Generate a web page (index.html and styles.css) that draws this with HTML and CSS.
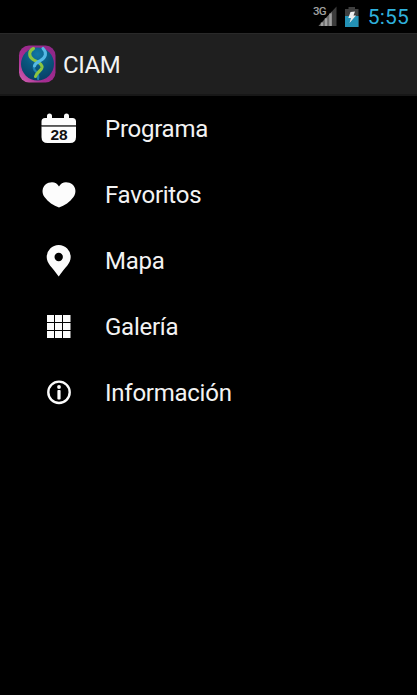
FILE: index.html
```html
<!DOCTYPE html>
<html lang="es">
<head>
    <meta charset="UTF-8">
    <meta name="viewport" content="width=device-width, initial-scale=1.0">
    <title>CIAM</title>
    <link rel="stylesheet" href="styles.css">
</head>
<body>
    <!-- Status bar -->
    <div class="status-bar">
        <svg class="signal" width="24" height="26" viewBox="0 -2 24 26">
            <path d="M5.500 20L23.500 .5V20Z" fill="#3c3c3c"/>
            <path d="M5.500 20L19 5.400V20Z" fill="#6a6a6a"/>
            <path d="M9 16.500V20M13 12.200V20M17.500 7.500V20" stroke="#a0a0a0" stroke-width="2.400"/>
            <text x="0" y="9">3G</text>
        </svg>
        <svg class="battery" width="14" height="20" viewBox="0 0 14 20">
            <path d="M3.500 0h6.500v2H13.500v18H0V2h3.500z" fill="#3f3f3f"/>
            <path d="M0 9h13.500v11H0z" fill="#2391b5"/>
            <path d="M5.500 5l4.500-.5-1.500 4h2.500L4.500 16l1.500-5H3.300z" fill="#eee"/>
        </svg>
        <span class="clock">5:55</span>
    </div>

    <!-- Action bar -->
    <div class="action-bar">
        <svg class="logo" width="38" height="38" viewBox="0 0 38 38">
            <defs>
                <linearGradient id="frame" x1="0" y1="1" x2="1" y2="0">
                    <stop offset="0" stop-color="#d565b4"/>
                    <stop offset=".35" stop-color="#a52c91"/>
                    <stop offset="1" stop-color="#8c2786"/>
                </linearGradient>
                <radialGradient id="ball" cx=".5" cy=".2" r=".8">
                    <stop offset="0" stop-color="#1279a6"/>
                    <stop offset=".5" stop-color="#09577f"/>
                    <stop offset="1" stop-color="#093f66"/>
                </radialGradient>
            </defs>
            <rect x="1" y=".5" width="36.500" height="37" rx="10" fill="url(#frame)"/>
            <circle cx="19.500" cy="19" r="16.500" fill="url(#ball)"/>
            <g fill="none" stroke-linecap="round">
                <path d="M17 18C14.500 22 16 25 18.500 27 20.500 29 20.500 31 20 34" stroke="#1f7fae" stroke-width="2.200"/>
                <path d="M15.500 3.500C10.500 6 10.500 11.500 15 14.500 18.500 16.800 24.500 18 24 22.500 23.500 26 18.500 27 17.500 31.500" stroke="#8bc53f" stroke-width="3.100"/>
                <path d="M25 3.500C29.500 8 27.500 12.500 22.500 15.500 20 17 17.500 18 16.500 21" stroke="#55b9e5" stroke-width="3.100"/>
            </g>
        </svg>
        <h1>CIAM</h1>
    </div>

    <!-- Menu -->
    <ul class="menu">
        <li>
            <svg width="36" height="36" viewBox="0 0 36 36">
                <path d="M.5 14V10.500Q.5 7 4 7H6V5a2.500 2.500 0 0 1 5 0v2h12V5a2.500 2.500 0 0 1 5 0v2h3.500Q35 7 35 10.500V14z"/>
                <path d="M.5 15.500H35V26Q35 32 29 32H6.500Q.5 32 .5 26z"/>
                <path d="M.5 14H35v1.500H.5z" fill="#555"/>
                <text class="day" x="18" y="28.500">28</text>
            </svg>
            <span>Programa</span>
        </li>
        <li>
            <svg width="36" height="36" viewBox="0 0 36 36">
                <path d="M18 9.500C15.500 4 8.500 4.200 4.500 7.500 1 10.500.5 16 3.500 20 7 25 12.500 28.500 18 30.500c5.500-2 11-5.500 14.500-10.500 3-4 2.500-9.500-1-12.500C27.500 4.200 20.500 4 18 9.500z"/>
            </svg>
            <span>Favoritos</span>
        </li>
        <li>
            <svg width="36" height="36" viewBox="0 0 36 36">
                <path fill-rule="evenodd" d="M17.700 2A12 12 0 0 0 5.700 14C5.700 20.500 11 24 17.700 33.500 24.400 24 29.700 20.500 29.700 14A12 12 0 0 0 17.700 2zM17.700 9.800a4.200 4.200 0 1 1 0 8.400 4.200 4.200 0 0 1 0-8.400z"/>
            </svg>
            <span>Mapa</span>
        </li>
        <li>
            <svg width="36" height="36" viewBox="0 0 36 36">
                <path d="M6 6h7v7H6zM14 6h7v7h-7zM22 6h7.500v7H22zM6 14h7v7H6zM14 14h7v7h-7zM22 14h7.500v7H22zM6 22h7v7H6zM14 22h7v7h-7zM22 22h7.500v7H22z"/>
            </svg>
            <span>Galería</span>
        </li>
        <li>
            <svg width="36" height="36" viewBox="0 0 36 36">
                <circle cx="18" cy="17.300" r="10.700" fill="none" stroke="#fcfcfc" stroke-width="2.400"/>
                <circle cx="18" cy="12" r="1.900"/>
                <rect x="16.400" y="15" width="3.200" height="9.500" rx=".8"/>
            </svg>
            <span>Información</span>
        </li>
    </ul>
</body>
</html>
```

FILE: styles.css
```css
body {
    font-family: Roboto, sans-serif;
    background-color: #000;
    color: #f3f3f3;
    margin: 0;
    padding: 0;
}
.status-bar {
    display: flex;
    justify-content: flex-end;
    align-items: center;
    height: 33px;
    padding-right: 8px;
    box-sizing: border-box;
}
.signal {
    margin-right: 8px;
    overflow: visible;
}
.signal text {
    font-size: 11.5px;
    font-weight: 500;
    letter-spacing: -0.8px;
    fill: #a0a0a0;
}
.battery {
    margin-right: 9px;
}
.clock {
    font-size: 21px;
    letter-spacing: 0.2px;
    color: #2fb1dc;
}
.action-bar {
    display: flex;
    align-items: center;
    height: 63px;
    padding-left: 18px;
    box-sizing: border-box;
    background-color: #1f1f1f;
    border-top: 1px solid #292929;
    border-bottom: 2px solid #171717;
}
h1 {
    margin: 2px 0 0 7px;
    font-size: 24px;
    font-weight: 400;
    letter-spacing: -0.4px;
}
.menu {
    list-style: none;
    margin: 0;
    padding: 0;
}
.menu li {
    display: flex;
    align-items: center;
    height: 66px;
    padding-left: 41px;
    font-size: 24px;
    letter-spacing: -0.25px;
}
.menu svg {
    fill: #fcfcfc;
    margin-right: 28px;
}
.menu .day {
    font-family: "Liberation Sans", sans-serif;
    font-size: 15.5px;
    font-weight: bold;
    letter-spacing: 0;
    text-anchor: middle;
    fill: #111;
}
```
